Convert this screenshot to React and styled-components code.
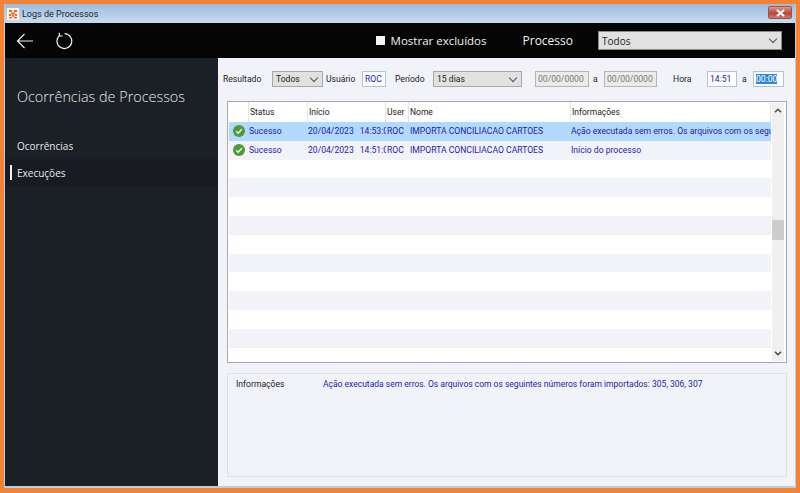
import React from 'react'
import styled, { createGlobalStyle } from 'styled-components'

const GlobalStyle = createGlobalStyle`
	html, body, #root {
		margin: 0;
		padding: 0;
		height: 100%;
	}
	body {
		font-family: Roboto, "Open Sans", sans-serif;
		overflow: hidden;
	}
`

const columns = '20px 59px 78px 23px 162px 1fr'

const rows = [
	{ status: 'Sucesso', start: '20/04/2023', time: '14:53:07', user: 'ROC', name: 'IMPORTA CONCILIACAO CARTOES', info: 'Ação executada sem erros. Os arquivos com os seguintes números foram importados', selected: true },
	{ status: 'Sucesso', start: '20/04/2023', time: '14:51:07', user: 'ROC', name: 'IMPORTA CONCILIACAO CARTOES', info: 'Início do processo' },
]

const blankRows = Array.from({ length: 10 }, (_, i) => i)

const App = () => {
	return (
		<>
			<GlobalStyle />
			<Frame>
				<Window>
					<TitleBar>
						<AppIcon viewBox="0 0 12 12">
							<rect width="12" height="12" fill="#fdf3ea" />
							<path d="M2 2h3v2H2zM7 2h3v2H7zM4 4.5h4v2H4zM2 6h2v2H2zM8 6h2v2H8zM5 7h2v2H5zM2 9h3v1.5H2zM7 9h3v1.5H7z" fill="#ef6b22" />
						</AppIcon>
						<WindowTitle>Logs de Processos</WindowTitle>
						<CloseButton>
							<svg width="9" height="8" viewBox="0 0 9 8">
								<path d="M1 1l7 6M8 1L1 7" stroke="#fff" strokeWidth="2.2" />
							</svg>
						</CloseButton>
					</TitleBar>
					<TopBar>
						<IconButton>
							<svg width="18" height="16" viewBox="0 0 18 16" fill="none" stroke="#f0f0f0" strokeWidth="1.2">
								<path d="M17 8H1.5M8.5 1L1.5 8l7 7" />
							</svg>
						</IconButton>
						<IconButton>
							<svg width="18" height="18" viewBox="0 0 18 18" fill="none" stroke="#f0f0f0" strokeWidth="1.2">
								<path d="M4.4 3.6A7.4 7.4 0 1 0 9.6 1.7" />
								<path d="M4.3 0.8v3.2h3.4" />
							</svg>
						</IconButton>
						<TopSpacer />
						<ShowDeleted>
							<CheckSquare />
							Mostrar excluídos
						</ShowDeleted>
						<ProcessLabel>Processo</ProcessLabel>
						<ProcessSelect>
							Todos
							<Chevron />
						</ProcessSelect>
					</TopBar>
					<Body>
						<Sidebar>
							<SidebarTitle>Ocorrências de Processos</SidebarTitle>
							<NavItem>Ocorrências</NavItem>
							<NavItem $active>Execuções</NavItem>
						</Sidebar>
						<Content>
							<Filters>
								<FilterLabel $width={49}>Resultado</FilterLabel>
								<SelectBox $width={51}>
									Todos
									<Chevron />
								</SelectBox>
								<FilterLabel $width={36} $left={3}>Usuário</FilterLabel>
								<Field $width={24}>ROC</Field>
								<FilterLabel $width={38} $left={9}>Período</FilterLabel>
								<SelectBox $width={89}>
									15 dias
									<Chevron />
								</SelectBox>
								<Field $width={54} $left={13} $disabled>00/00/0000</Field>
								<FilterLabel $width={11} $left={4}>a</FilterLabel>
								<Field $width={53} $disabled>00/00/0000</Field>
								<FilterLabel $width={34} $left={16}>Hora</FilterLabel>
								<Field $width={30}>14:51</Field>
								<FilterLabel $width={11} $left={5}>a</FilterLabel>
								<Field $width={31}><Highlight>00:00</Highlight></Field>
							</Filters>
							<TablePanel>
								<TableArea>
									<HeaderRow>
										<HeaderCell />
										<HeaderCell>Status</HeaderCell>
										<HeaderCell>Início</HeaderCell>
										<HeaderCell>User</HeaderCell>
										<HeaderCell>Nome</HeaderCell>
										<HeaderCell>Informações</HeaderCell>
									</HeaderRow>
									{rows.map((row) => (
										<Row key={row.time} $selected={row.selected}>
											<IconCell>
												<svg width="12" height="12" viewBox="0 0 13 13">
													<circle cx="6.5" cy="6.5" r="6.5" fill="#4f9a35" />
													<path d="M3.5 6.8l2.1 2.1 3.9-4.2" fill="none" stroke="#fff" strokeWidth="1.5" />
												</svg>
											</IconCell>
											<Cell>{row.status}</Cell>
											<Cell $right={1}>{row.start}<TimeText>{row.time}</TimeText></Cell>
											<Cell $left={1}>{row.user}</Cell>
											<Cell $left={1}>{row.name}</Cell>
											<Cell>{row.info}</Cell>
										</Row>
									))}
									{blankRows.map((i) => (
										<BlankRow key={i} $striped={i % 2 === 1} />
									))}
								</TableArea>
								<ScrollBar>
									<ScrollArrow>
										<svg width="8" height="5" viewBox="0 0 8 5" fill="none" stroke="#444" strokeWidth="1.4"><path d="M1 4.2l3-3 3 3" /></svg>
									</ScrollArrow>
									<ScrollThumb />
									<ScrollArrow $bottom>
										<svg width="8" height="5" viewBox="0 0 8 5" fill="none" stroke="#444" strokeWidth="1.4"><path d="M1 .8l3 3 3-3" /></svg>
									</ScrollArrow>
								</ScrollBar>
							</TablePanel>
							<InfoPanel>
								<InfoLabel>Informações</InfoLabel>
								<InfoText>Ação executada sem erros. Os arquivos com os seguintes números foram importados: 305, 306, 307</InfoText>
							</InfoPanel>
						</Content>
					</Body>
				</Window>
			</Frame>
		</>
	)
}

export default App

const Frame = styled.div`
	width: 800px;
	height: 493px;
	box-sizing: border-box;
	padding: 4px 4px 5px 4px;
	background: #f58233;
`

const Window = styled.div`
	height: 100%;
	display: flex;
	flex-direction: column;
	box-sizing: border-box;
	border: 1px solid #b4d0e8;
	border-top: none;
	border-bottom-width: 2px;
`

const TitleBar = styled.div`
	height: 19px;
	flex: none;
	display: flex;
	align-items: center;
	padding-left: 2px;
	background: linear-gradient(#9dbbdc, #c9dcf0);
`

const AppIcon = styled.svg`
	width: 12px;
	height: 12px;
	flex: none;
`

const WindowTitle = styled.span`
	margin-left: 3px;
	font-size: 9px;
	color: #1c2430;
	flex: 1;
`

const CloseButton = styled.div`
	width: 24px;
	height: 13px;
	margin-right: 3px;
	margin-top: -2px;
	display: flex;
	align-items: center;
	justify-content: center;
	box-sizing: border-box;
	border: 1px solid #8c5a52;
	border-radius: 2px;
	background: linear-gradient(#d99a8e, #c0452f 55%, #cf7a66);
`

const TopBar = styled.div`
	height: 35px;
	flex: none;
	display: flex;
	align-items: center;
	padding-left: 11px;
	background: #050505;
	color: #f2f2f2;
	font-family: "Open Sans", sans-serif;
`

const IconButton = styled.div`
	width: 18px;
	height: 18px;
	display: flex;
	align-items: center;
	justify-content: center;
	margin-right: 21px;
`

const TopSpacer = styled.div`
	flex: 1;
`

const ShowDeleted = styled.div`
	display: flex;
	align-items: center;
	font-size: 11.5px;
	margin-right: 36px;
`

const CheckSquare = styled.span`
	width: 9px;
	height: 9px;
	background: #f4f4f4;
	margin-right: 6px;
`

const ProcessLabel = styled.div`
	font-size: 12px;
	margin-right: 25px;
`

const ProcessSelect = styled.div`
	width: 184px;
	height: 19px;
	margin-right: 13px;
	padding-left: 3px;
	display: flex;
	align-items: center;
	justify-content: space-between;
	box-sizing: border-box;
	background: #e1e1e1;
	border: 1px solid #8a8a8a;
	font-size: 10px;
	color: #222;
`

const Chevron = styled.span`
	width: 5px;
	height: 5px;
	margin: 0 5px 3px 0;
	border-right: 1px solid #555;
	border-bottom: 1px solid #555;
	transform: rotate(45deg);
`

const Body = styled.div`
	flex: 1;
	min-height: 0;
	display: flex;
`

const Sidebar = styled.nav`
	width: 213px;
	flex: none;
	background: #1b1f26;
	color: #e8e8e8;
	font-family: "Open Sans", sans-serif;
`

const SidebarTitle = styled.h1`
	margin: 29px 0 26px 12px;
	font-size: 14.4px;
	line-height: 19px;
	font-weight: 300;
	color: #e6e8ea;
`

const NavItem = styled.div`
	height: 27px;
	display: flex;
	align-items: center;
	padding-left: 12px;
	font-size: 10px;
	position: relative;
	background: ${({ $active }) => ($active ? '#181c22' : 'transparent')};

	&::before {
		content: '';
		display: ${({ $active }) => ($active ? 'block' : 'none')};
		position: absolute;
		left: 5px;
		top: 6px;
		width: 2px;
		height: 15px;
		background: #f0f0f0;
	}
`

const Content = styled.main`
	flex: 1;
	min-width: 0;
	background: #f1f3f9;
	padding: 13px 8px 9px 9px;
	display: flex;
	flex-direction: column;
`

const Filters = styled.div`
	height: 16px;
	display: flex;
	align-items: center;
	margin-left: -4px;
`

const FilterLabel = styled.span`
	width: ${({ $width }) => $width}px;
	flex: none;
	margin-left: ${({ $left }) => $left || 0}px;
	font-size: 8.6px;
	color: #222;
	white-space: nowrap;
`

const SelectBox = styled.div`
	width: ${({ $width }) => $width}px;
	height: 16px;
	flex: none;
	padding-left: 3px;
	display: flex;
	align-items: center;
	justify-content: space-between;
	box-sizing: border-box;
	background: #e1e1e1;
	border: 1px solid #a8a8a8;
	font-size: 8.6px;
	color: #222;
`

const Field = styled.div`
	width: ${({ $width }) => $width}px;
	height: 16px;
	margin-left: ${({ $left }) => $left || 0}px;
	padding-left: 2px;
	display: flex;
	align-items: center;
	flex: none;
	box-sizing: border-box;
	background: ${({ $disabled }) => ($disabled ? '#ebebeb' : '#fff')};
	border: 1px solid ${({ $disabled }) => ($disabled ? '#b5b5b5' : '#a9c6e4')};
	font-size: 8.6px;
	color: ${({ $disabled }) => ($disabled ? '#7a7a7a' : '#1a1ab0')};
`

const Highlight = styled.span`
	background: #2f86d8;
	color: #fff;
`

const TablePanel = styled.div`
	height: 262px;
	flex: none;
	margin-top: 14px;
	display: flex;
	box-sizing: border-box;
	background: #fff;
	border: 1px solid #a9a9a9;
	padding: 0 1px 1px 1px;
`

const TableArea = styled.div`
	flex: 1;
	min-width: 0;
	overflow: hidden;
`

const HeaderRow = styled.div`
	height: 20px;
	display: grid;
	grid-template-columns: ${columns};
`

const HeaderCell = styled.div`
	padding-left: 1px;
	font-size: 8.5px;
	line-height: 20px;
	color: #222;
	border-right: 1px solid #e6e6e6;
	white-space: nowrap;
`

const Row = styled.div`
	height: 18.8px;
	display: grid;
	grid-template-columns: ${columns};
	align-items: center;
	background: ${({ $selected }) => ($selected ? '#b3d9ff' : '#f2f3f9')};
`

const IconCell = styled.div`
	display: flex;
	padding-left: 4px;
`

const Cell = styled.div`
	padding-left: ${({ $left }) => $left || 0}px;
	padding-right: ${({ $right }) => $right || 0}px;
	font-size: 8.6px;
	color: #1c1caa;
	white-space: nowrap;
	overflow: hidden;
`

const TimeText = styled.span`
	margin-left: 6px;
`

const BlankRow = styled.div`
	height: 18.8px;
	background: ${({ $striped }) => ($striped ? '#f2f3f9' : '#fff')};
`

const ScrollBar = styled.div`
	width: 12px;
	flex: none;
	margin: 1px 1px 0 1px;
	background: #f0f0f0;
	position: relative;
`

const ScrollArrow = styled.div`
	height: 15px;
	display: flex;
	align-items: center;
	justify-content: center;
	position: absolute;
	left: 0;
	right: 0;
	${({ $bottom }) => ($bottom ? 'bottom: 0;' : 'top: 0;')}
`

const ScrollThumb = styled.div`
	position: absolute;
	left: 0;
	right: 0;
	top: 117px;
	height: 20px;
	background: #cdcdcd;
`

const InfoPanel = styled.div`
	flex: 1;
	margin-top: 10px;
	box-sizing: border-box;
	border: 1px solid #e0e1e6;
	padding: 5px 8px;
	display: flex;
	align-items: flex-start;
`

const InfoLabel = styled.div`
	width: 87px;
	flex: none;
	font-size: 8.6px;
	color: #222;
`

const InfoText = styled.div`
	font-size: 8.5px;
	color: #1c1caa;
`
